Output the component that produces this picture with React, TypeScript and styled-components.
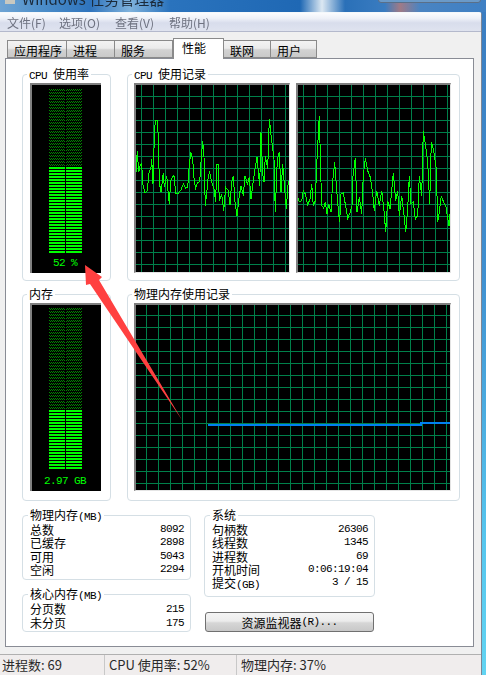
import React, { FC } from "react";
import styled, { createGlobalStyle } from "styled-components";

const CPU_LEFT = [33,310,37,245,41,310,45,290,50,285,53,345,60,372,67,365,72,312,78,295,80,270,84,345,88,205,91,155,97,155,100,205,103,340,108,370,115,312,118,355,125,320,130,375,133,405,137,335,142,325,147,320,152,372,160,372,168,362,175,345,182,358,188,355,192,300,197,250,203,270,208,340,212,358,218,340,224,338,229,265,233,215,237,265,241,410,246,365,250,320,254,310,260,340,267,360,272,398,275,285,279,285,283,395,290,375,296,425,302,355,310,365,315,408,320,340,325,320,330,400,336,440,343,380,348,350,355,380,360,320,367,345,373,325,378,390,383,350,390,300,396,265,404,350,408,190,413,315,417,340,421,260,428,300,433,150,440,215,447,270,451,430,457,270,463,250,468,370,473,285,478,345,484,420,490,335];
const CPU_RIGHT = [20,385,25,398,32,395,37,365,43,375,50,408,57,390,62,345,67,410,73,395,78,270,85,140,90,340,93,410,98,418,103,398,108,435,113,405,120,430,125,335,131,280,137,365,143,435,146,458,150,375,157,372,163,405,170,448,177,432,183,410,186,320,193,268,198,430,205,385,212,435,217,320,223,268,230,305,238,325,245,375,250,425,257,365,265,410,272,365,278,415,284,488,290,395,297,420,307,312,314,395,320,365,325,440,332,380,340,445,344,490,350,420,355,320,360,405,367,398,373,450,380,440,385,320,392,380,397,185,405,240,410,280,416,405,421,218,428,245,436,300,440,458,445,430,451,380,458,400,465,415,474,470,479,410];

// points were read off a 3x crop, so bring them back to pixels
const toPoints = (raw: number[], originX: number, originY: number) => {
  const out: string[] = [];
  for (let i = 0; i < raw.length; i += 2) {
    out.push(`${(raw[i] / 3 - originX).toFixed(1)},${(raw[i + 1] / 3 - originY).toFixed(1)}`);
  }
  return out.join(" ");
};

const Scope: FC<{
  id: string;
  width: number;
  height: number;
  offsetX: number;
  offsetY: number;
  children?: React.ReactNode;
}> = ({ id, width, height, offsetX, offsetY, children }) => (
  <ScopeFrame $width={width} $height={height}>
    <svg width={width - 3} height={height - 3} shapeRendering="crispEdges">
      <defs>
        <pattern id={id} x={offsetX} y={offsetY} width="12" height="12" patternUnits="userSpaceOnUse">
          <path d="M0.5 0V12M0 0.5H12" stroke="#00804a" fill="none" />
        </pattern>
      </defs>
      <rect width="100%" height="100%" fill={`url(#${id})`} />
      {children}
    </svg>
  </ScopeFrame>
);

const Meter: FC<{
  id: string;
  top: number;
  height: number;
  dimRows: number;
  litRows: number;
  labelGap: number;
  label: string;
}> = ({ id, top, height, dimRows, litRows, labelGap, label }) => {
  const dimHeight = dimRows * 3;
  const litHeight = litRows * 3;
  return (
    <MeterBox $top={top} $height={height}>
      <MeterBars width="36" height={dimHeight + litHeight} shapeRendering="crispEdges">
        <defs>
          <pattern id={id} width="2" height="3" patternUnits="userSpaceOnUse">
            <rect x="0" y="0" width="1" height="1" fill="#008800" />
            <rect x="1" y="1" width="1" height="1" fill="#008800" />
          </pattern>
          <pattern id={`${id}-lit`} width="36" height="3" y={dimHeight} patternUnits="userSpaceOnUse">
            <rect x="2" width="16" height="2" fill="#00ff00" />
            <rect x="19" width="16" height="2" fill="#00ff00" />
          </pattern>
        </defs>
        <rect x="2" width="16" height={dimHeight} fill={`url(#${id})`} />
        <rect x="19" width="16" height={dimHeight} fill={`url(#${id})`} />
        <rect y={dimHeight} width="36" height={litHeight} fill={`url(#${id}-lit)`} />
      </MeterBars>
      <MeterLabel $gap={labelGap}>{label}</MeterLabel>
    </MeterBox>
  );
};

const App: FC = () => {
  return (
    <Screen>
      <GlobalStyle />
      <TitleBar>
        <TitleIcon />
        <TitleText>Windows 任务管理器</TitleText>
        <WindowButtons />
      </TitleBar>
      <Window>
        <MenuBar>
          <MenuItem $width={52}>文件(F)</MenuItem>
          <MenuItem $width={56}>选项(O)</MenuItem>
          <MenuItem $width={54}>查看(V)</MenuItem>
          <MenuItem $width={54}>帮助(H)</MenuItem>
        </MenuBar>
        <TabRow>
          <Tab $width={60}>应用程序</Tab>
          <Tab $width={48}>进程</Tab>
          <Tab $width={58}>服务</Tab>
          <Tab $width={51} $active>性能</Tab>
          <Tab $width={47}>联网</Tab>
          <Tab $width={46}>用户</Tab>
        </TabRow>
        <Panel>
          <MeterRow>
            <MeterGroup>
              <GroupTitle><Latin>CPU </Latin>使用率</GroupTitle>
              <Meter id="cpu-dim" top={4} height={190} dimRows={26} litRows={29} labelGap={2} label="52 %" />
            </MeterGroup>
            <HistoryGroup>
              <GroupTitle><Latin>CPU </Latin>使用记录</GroupTitle>
              <ScopeRow>
                <Scope id="grid-a" width={156} height={190} offsetX={5} offsetY={11}>
                  <polyline points={toPoints(CPU_LEFT, 11, 16)} fill="none" stroke="#00ff00" />
                </Scope>
                <Scope id="grid-b" width={155} height={190} offsetX={5} offsetY={11}>
                  <polyline points={toPoints(CPU_RIGHT, 7, 16)} fill="none" stroke="#00ff00" />
                </Scope>
              </ScopeRow>
            </HistoryGroup>
          </MeterRow>
          <MeterRow>
            <MeterGroup>
              <GroupTitle>内存</GroupTitle>
              <Meter id="mem-dim" top={3} height={188} dimRows={34} litRows={20} labelGap={4} label="2.97 GB" />
            </MeterGroup>
            <HistoryGroup>
              <GroupTitle>物理内存使用记录</GroupTitle>
              <ScopeRow>
                <Scope id="grid-c" width={317} height={188} offsetX={10} offsetY={10}>
                  <path d="M72 120H284.5V118H314" fill="none" stroke="#0080f0" strokeWidth="2" />
                </Scope>
              </ScopeRow>
            </HistoryGroup>
          </MeterRow>
          <StatsRow>
            <StatsColumn>
              <StatsGroup $height={65}>
                <GroupTitle>物理内存<Latin>(MB)</Latin></GroupTitle>
                <StatLine $pitch={13.3}><span>总数</span><StatValue>8092</StatValue></StatLine>
                <StatLine $pitch={13.3}><span>已缓存</span><StatValue>2898</StatValue></StatLine>
                <StatLine $pitch={13.3}><span>可用</span><StatValue>5043</StatValue></StatLine>
                <StatLine $pitch={13.3}><span>空闲</span><StatValue>2294</StatValue></StatLine>
              </StatsGroup>
              <StatsGroup $height={38}>
                <GroupTitle>核心内存<Latin>(MB)</Latin></GroupTitle>
                <StatLine $pitch={14}><span>分页数</span><StatValue>215</StatValue></StatLine>
                <StatLine $pitch={14}><span>未分页</span><StatValue>175</StatValue></StatLine>
              </StatsGroup>
            </StatsColumn>
            <SystemColumn>
              <StatsGroup $height={82}>
                <GroupTitle>系统</GroupTitle>
                <StatLine $pitch={13.3}><span>句柄数</span><StatValue>26306</StatValue></StatLine>
                <StatLine $pitch={13.3}><span>线程数</span><StatValue>1345</StatValue></StatLine>
                <StatLine $pitch={13.3}><span>进程数</span><StatValue>69</StatValue></StatLine>
                <StatLine $pitch={13.3}><span>开机时间</span><StatValue>0:06:19:04</StatValue></StatLine>
                <StatLine $pitch={13.3}><span>提交<Latin>(GB)</Latin></span><StatValue>3 / 15</StatValue></StatLine>
              </StatsGroup>
              <MonitorButton>资源监视器<Latin>(R)...</Latin></MonitorButton>
            </SystemColumn>
          </StatsRow>
        </Panel>
        <StatusBar>
          <StatusCell $width={104}>进程数: 69</StatusCell>
          <StatusCell $width={132}>CPU 使用率: 52%</StatusCell>
          <StatusCell $width={240}>物理内存: 37%</StatusCell>
        </StatusBar>
      </Window>
      <Arrow width="200" height="430">
        <polygon points="85,265 102,277 99,280 182,420 90,284 86,285" fill="#ff4040" />
      </Arrow>
    </Screen>
  );
};

export default App;

const GlobalStyle = createGlobalStyle`
  html, body {
    margin: 0;
    padding: 0;
    background: #3f86c6;
  }
  * {
    box-sizing: border-box;
  }
`;

const Screen = styled.div`
  position: relative;
  width: 486px;
  height: 675px;
  overflow: hidden;
  font-family: "Noto Sans CJK SC", "Liberation Sans", sans-serif;
  font-size: 12px;
  color: #000;
  background: linear-gradient(180deg, #3a7cc0 0%, #3f8fd0 40%, #56c6ee 80%, #62d4f2 100%);
`;

const TitleBar = styled.div`
  position: relative;
  display: flex;
  align-items: center;
  height: 12px;
  overflow: hidden;
  background: linear-gradient(
    90deg,
    #6fa4d4 0,
    #4d8fca 40px,
    #2f74bd 90px,
    #7fb2dc 130px,
    #2a73bd 170px,
    #1f68b4 300px,
    #dce8f2 322px,
    #2a70b8 345px,
    #3a7cc0 385px,
    #a07a86 400px,
    #4a84c2 420px,
    #3f80c4 486px
  );
  filter: blur(0.4px);
`;

const TitleIcon = styled.div`
  width: 10px;
  height: 6px;
  margin: -10px 0 0 5px;
  background: #c8c8c0;
`;

const TitleText = styled.div`
  margin: -14px 0 0 7px;
  font-size: 15px;
  line-height: 16px;
  color: #1b2a3a;
  white-space: nowrap;
`;

const WindowButtons = styled.div`
  position: absolute;
  top: -6px;
  right: 5px;
  width: 103px;
  height: 9px;
  border: 1px solid #5a6f88;
  border-radius: 3px;
  background: #6b9ac8;
`;

const Window = styled.div`
  display: flex;
  flex-direction: column;
  width: 482px;
  height: 663px;
  background: #f0f0f0;
  border-top: 1px solid #f4f8fb;
  border-right: 1px solid #7c8696;
  border-top-right-radius: 3px;
`;

const MenuBar = styled.div`
  display: flex;
  align-items: center;
  height: 19px;
  padding-left: 7px;
  background: linear-gradient(180deg, #fbfcfe 0%, #eef1f8 30%, #d8ddec 55%, #dfe3ef 100%);
  border-bottom: 1px solid #b4b9cc;
  color: #6e7280;
  filter: blur(0.3px);
`;

const MenuItem = styled.span<{ $width: number }>`
  width: ${(p) => p.$width}px;
  font-size: 12px;
  white-space: nowrap;
`;

const TabRow = styled.div`
  display: flex;
  align-items: flex-end;
  height: 26px;
  padding-left: 7px;
  position: relative;
  z-index: 1;
`;

const Tab = styled.div<{ $width: number; $active?: boolean }>`
  width: ${(p) => p.$width}px;
  height: ${(p) => (p.$active ? 21 : 18)}px;
  margin-bottom: ${(p) => (p.$active ? -1 : 0)}px;
  padding-left: ${(p) => (p.$active ? 8 : 6)}px;
  line-height: ${(p) => (p.$active ? 18 : 19)}px;
  font-size: 12px;
  color: #000;
  border: 1px solid #8a8a8a;
  border-bottom: ${(p) => (p.$active ? "none" : "1px solid #8a8a8a")};
  border-left-width: ${(p) => (p.$active ? 1 : 0)}px;
  background: ${(p) => (p.$active ? "#fff" : "linear-gradient(180deg, #f3f3f3 0%, #ebebeb 45%, #d2d2d2 55%, #c9c9c9 100%)")};

  &:first-child {
    border-left-width: 1px;
  }
`;

const Panel = styled.div`
  display: flex;
  flex-direction: column;
  gap: 13px;
  width: 469px;
  height: 589px;
  margin-left: 5px;
  padding: 15px 0 0 16px;
  background: #fff;
  border: 1px solid #898c95;
`;

const MeterRow = styled.div`
  display: flex;
  gap: 16px;
  height: 207px;
`;

const GroupBox = styled.div`
  position: relative;
  border: 1px solid #d5dfe5;
  border-radius: 4px;
`;

const GroupTitle = styled.div`
  width: fit-content;
  height: 14px;
  margin: -8px 0 1px -2px;
  padding: 0 2px;
  font-size: 12px;
  line-height: 14px;
  background: #fff;
  white-space: nowrap;
`;

const Latin = styled.span`
  font-family: "Liberation Mono", monospace;
  font-size: 11px;
  letter-spacing: -0.6px;
`;

const MeterGroup = styled(GroupBox)`
  width: 89px;
  padding-left: 7px;

  ${GroupTitle} {
    margin-left: -3px;
  }
`;

const HistoryGroup = styled(GroupBox)`
  width: 333px;
  padding-left: 6px;
`;

const MeterBox = styled.div<{ $top: number; $height: number }>`
  display: flex;
  flex-direction: column;
  align-items: center;
  width: 71px;
  height: ${(p) => p.$height}px;
  margin-top: 2px;
  padding: ${(p) => p.$top}px 3px 0 0;
  background: #000;
  border-top: 2px solid #808080;
  border-left: 2px solid #808080;
`;

const MeterBars = styled.svg`
  flex: none;
`;

const MeterLabel = styled.div<{ $gap: number }>`
  margin-top: ${(p) => p.$gap}px;
  font-family: "Liberation Mono", monospace;
  font-size: 11px;
  line-height: 14px;
  letter-spacing: -0.6px;
  color: #00ff00;
  white-space: pre;
`;

const ScopeRow = styled.div`
  display: flex;
  gap: 6px;
  margin-top: 2px;
`;

const ScopeFrame = styled.div<{ $width: number; $height: number }>`
  display: flex;
  width: ${(p) => p.$width}px;
  height: ${(p) => p.$height}px;
  background: #000;
  border-top: 2px solid #808080;
  border-left: 2px solid #808080;
  border-right: 1px solid #e4e4e4;
  border-bottom: 1px solid #e4e4e4;
`;

const StatsRow = styled.div`
  display: flex;
  gap: 13px;
  margin-top: 1px;
`;

const StatsColumn = styled.div`
  display: flex;
  flex-direction: column;
  gap: 14px;
  width: 169px;
`;

const SystemColumn = styled.div`
  display: flex;
  flex-direction: column;
  gap: 15px;
  width: 171px;
`;

const StatsGroup = styled(GroupBox)<{ $height: number }>`
  height: ${(p) => p.$height}px;
  padding: 0 6px 0 7px;
`;

const StatLine = styled.div<{ $pitch: number }>`
  display: flex;
  justify-content: space-between;
  height: ${(p) => p.$pitch}px;
  line-height: ${(p) => p.$pitch}px;
  font-size: 12px;
  white-space: nowrap;
`;

const StatValue = styled.span`
  font-family: "Liberation Mono", monospace;
  font-size: 11px;
  letter-spacing: -0.6px;
`;

const MonitorButton = styled.div`
  display: flex;
  align-items: center;
  justify-content: center;
  width: 169px;
  height: 20px;
  margin-left: 1px;
  font-size: 12px;
  background: linear-gradient(180deg, #f4f4f4 0%, #ececec 45%, #d6d6d6 55%, #c8c8c8 100%);
  border: 1px solid #707070;
  border-radius: 3px;
`;

const StatusBar = styled.div`
  display: flex;
  height: 21px;
  margin-top: 7px;
  background: #f0eded;
  border-top: 1px solid #b0b0b0;
`;

const StatusCell = styled.div<{ $width: number }>`
  width: ${(p) => p.$width}px;
  padding-left: 2px;
  font-size: 13px;
  line-height: 20px;
  color: #2a2a2a;
  white-space: nowrap;

  & + & {
    padding-left: 4px;
    border-left: 1px solid #c8c8c8;
  }
`;

const Arrow = styled.svg`
  position: absolute;
  left: 0;
  top: 0;
`;
